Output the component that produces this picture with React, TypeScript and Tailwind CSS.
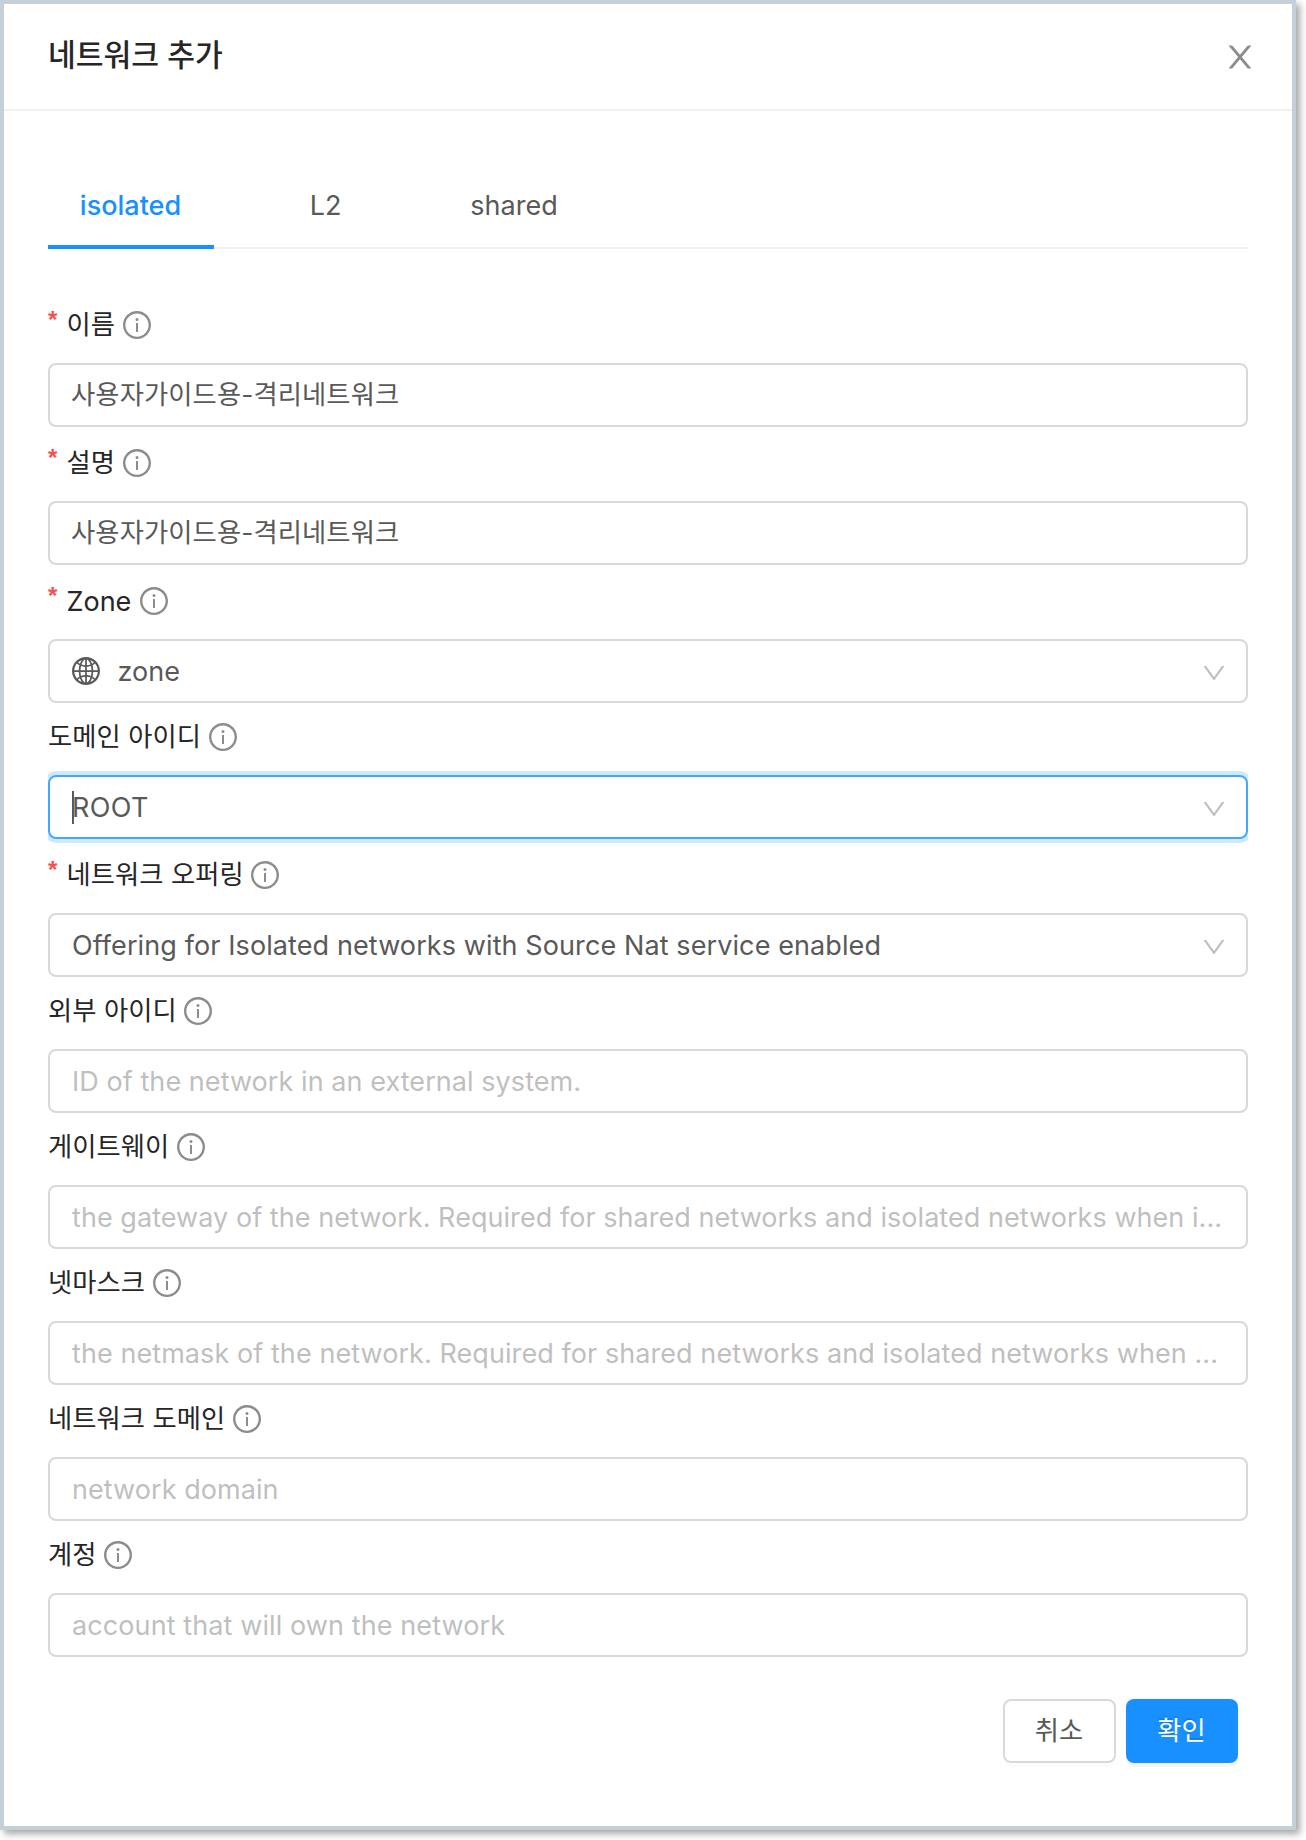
import type { ReactNode } from "react";
import { AiOutlineDown, AiOutlineGlobal, AiOutlineInfoCircle } from "react-icons/ai";

type Field = {
  label: string;
  latinLabel?: boolean;
  required?: boolean;
  value?: string;
  placeholder?: string;
  select?: boolean;
  focused?: boolean;
  globe?: boolean;
  textClass: string;
};

const LATIN = "text-[27px] tracking-[0.06px]";
const KOREAN = "text-[26.3px] -left-px tracking-[0.12px]";

const fields: Field[] = [
  { label: "이름", required: true, value: "사용자가이드용-격리네트워크", textClass: KOREAN },
  { label: "설명", required: true, value: "사용자가이드용-격리네트워크", textClass: KOREAN },
  { label: "Zone", latinLabel: true, required: true, value: "zone", select: true, globe: true, textClass: LATIN },
  { label: "도메인 아이디", value: "ROOT", select: true, focused: true, textClass: "text-[27px] tracking-[0.4px]" },
  {
    label: "네트워크 오퍼링",
    required: true,
    value: "Offering for Isolated networks with Source Nat service enabled",
    select: true,
    textClass: "text-[27px] tracking-[0.1px]",
  },
  { label: "외부 아이디", placeholder: "ID of the network in an external system.", textClass: LATIN },
  {
    label: "게이트웨이",
    placeholder: "the gateway of the network. Required for shared networks and isolated networks when i...",
    textClass: "text-[27px] tracking-[0.05px]",
  },
  {
    label: "넷마스크",
    placeholder: "the netmask of the network. Required for shared networks and isolated networks when ...",
    textClass: "text-[27px] tracking-[0.07px]",
  },
  { label: "네트워크 도메인", placeholder: "network domain", textClass: LATIN },
  { label: "계정", placeholder: "account that will own the network", textClass: "text-[27px] tracking-[0.1px]" },
];

function CloseIcon() {
  return (
    <svg viewBox="0 0 1024 1024" className="size-9 fill-[#8c8c8c]" aria-hidden="true">
      <path d="M563.8 512l262.5-312.9c4.4-5.2.7-13.1-6.1-13.1h-79.8c-4.7 0-9.2 2.1-12.3 5.7L511.6 449.8 295.1 191.7c-3-3.6-7.5-5.7-12.3-5.7H203c-6.8 0-10.5 7.9-6.1 13.1L459.4 512 196.9 824.9A7.95 7.95 0 0 0 203 838h79.8c4.7 0 9.2-2.1 12.3-5.7l216.5-258.1 216.5 258.1c3 3.6 7.5 5.7 12.3 5.7h79.8c6.8 0 10.5-7.9 6.1-13.1L563.8 512z" />
    </svg>
  );
}

function FieldRow({ field }: { field: Field }) {
  return (
    <div className={field.required ? "pt-0.5" : ""}>
      <div className="mb-1 flex h-[68px] items-center">
        {field.required && (
          <span className="relative -top-[5px] mr-2 w-[10.5px] font-[Liberation_Sans] text-[24px] leading-none font-bold text-[#ff4d4f]">
            *
          </span>
        )}
        <span
          className={`relative whitespace-nowrap text-[#262626] ${field.latinLabel ? "text-[27px]" : "text-[26.3px] tracking-[0.08px]"}`}
        >
          {field.label}
        </span>
        <AiOutlineInfoCircle className={`size-8 shrink-0 text-[#8c8c8c] ${field.latinLabel ? "ml-[6.5px]" : "ml-[5.5px]"}`} />
      </div>
      <div
        className={`flex h-16 items-center rounded-lg border-2 px-[22px] ${
          field.focused ? "border-[#40a9ff] shadow-[0_0_0_4px_rgba(24,144,255,0.2)] [clip-path:inset(-4px_0)]" : "border-[#d9d9d9]"
        }`}
      >
        {field.globe && <AiOutlineGlobal className="-ml-0.5 mr-[15.5px] size-8 shrink-0 text-[#595959]" />}
        {field.focused && <span className="-mr-0.5 h-[33px] w-0.5 bg-[#595959]" />}
        <span className={`relative grow whitespace-nowrap ${field.textClass} ${field.value ? "text-[#595959]" : "text-[#bfbfbf]"}`}>
          {field.value ?? field.placeholder}
        </span>
        {field.select && <AiOutlineDown className="-mr-1 mt-1 size-7 shrink-0 text-[#bfbfbf]" />}
      </div>
    </div>
  );
}

function Tab({ children, className }: { children: ReactNode; className: string }) {
  return <div className={`flex h-[86px] items-center justify-center text-[27px] ${className}`}>{children}</div>;
}

export default function App() {
  return (
    <div className="h-[1840px] w-[1306px] overflow-hidden bg-white font-['Inter','Noto_Sans_CJK_KR',sans-serif] leading-none">
      <div className="flex h-[1830px] w-[1296px] flex-col border-4 border-[#c3d0d8] bg-white shadow-[4px_4px_7px_rgba(0,0,0,0.35)]">
        <header className="flex h-[107px] items-center justify-between border-b-2 border-[#f0f0f0] pr-[34px] pl-11">
          <h1 className="relative -top-px text-[30.2px] font-medium text-[#262626]">네트워크 추가</h1>
          <CloseIcon />
        </header>
        <main className="flex flex-col px-11 pt-[52px]">
          <nav className="flex h-[86px] shadow-[inset_0_-2px_0_#f0f0f0]">
            <Tab className="w-[166px] border-b-4 border-[#1890ff] pt-0.5 pr-px font-medium text-[#1890ff]">isolated</Tab>
            <Tab className="ml-16 w-[96px] pr-px pb-0.5 text-[#595959]">L2</Tab>
            <Tab className="ml-16 w-[152px] pb-0.5 text-[#595959]">shared</Tab>
          </nav>
          <form className="pt-10">
            {fields.map((field) => (
              <FieldRow key={field.label} field={field} />
            ))}
          </form>
          <footer className="mt-[42px] flex justify-end gap-2.5 pr-2.5">
            <button className="h-16 w-[113px] rounded-lg border-2 border-[#d9d9d9] pr-px text-[26.3px] text-[#595959] shadow-[0_4px_0_rgba(0,0,0,0.016)]">
              취소
            </button>
            <button className="h-16 w-28 rounded-lg bg-[#1890ff] pr-px text-[26.3px] text-white shadow-[0_4px_0_rgba(0,0,0,0.045)] [text-shadow:0_-2px_0_rgba(0,0,0,0.12)]">
              확인
            </button>
          </footer>
        </main>
      </div>
    </div>
  );
}
